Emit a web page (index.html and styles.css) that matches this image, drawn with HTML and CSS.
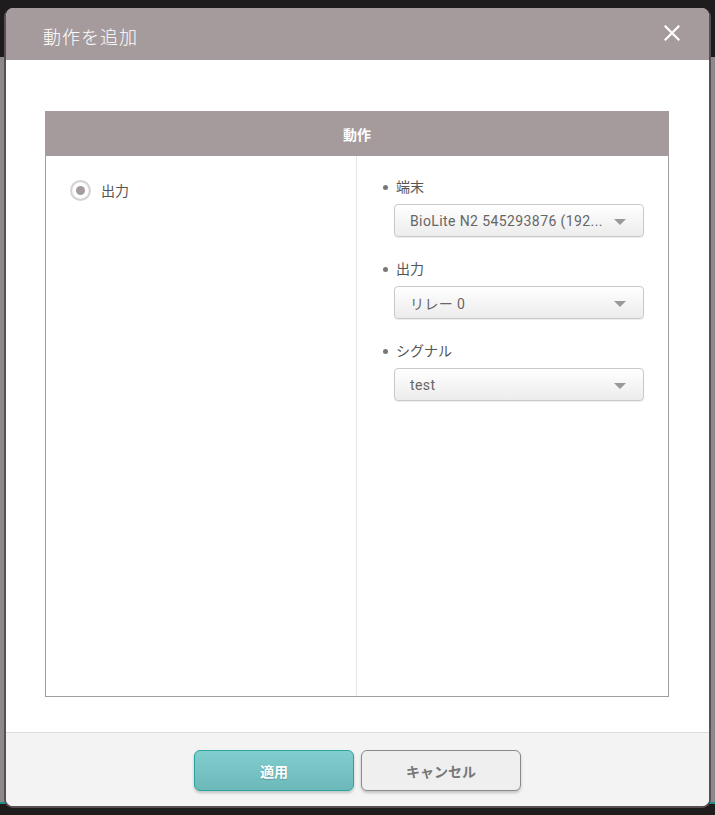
FILE: index.html
```html
<!DOCTYPE html>
<html lang="ja">
<head>
<meta charset="utf-8">
<link rel="stylesheet" href="styles.css">
</head>
<body>
<div class="modal">
  <div class="modal-header">
    <span class="modal-title">動作を追加</span>
    <svg class="close" width="16" height="16" viewBox="0 0 16 16"><path d="M1.5 1.5 L14.5 14.5 M14.5 1.5 L1.5 14.5" stroke="#fff" stroke-width="2.2" stroke-linecap="square"/></svg>
  </div>
  <div class="modal-body">
    <div class="panel">
      <div class="panel-head">動作</div>
      <div class="panel-cols">
        <div class="col-left">
          <label class="radio-row">
            <span class="radio"><span class="dot"></span></span>
            <span class="radio-label">出力</span>
          </label>
        </div>
        <div class="col-right">
          <div class="field">
            <div class="field-label">端末</div>
            <div class="select"><span class="sel-text">BioLite N2 545293876 (192...</span><span class="arrow"></span></div>
          </div>
          <div class="field">
            <div class="field-label">出力</div>
            <div class="select"><span class="sel-text">リレー 0</span><span class="arrow"></span></div>
          </div>
          <div class="field">
            <div class="field-label">シグナル</div>
            <div class="select"><span class="sel-text">test</span><span class="arrow"></span></div>
          </div>
        </div>
      </div>
    </div>
  </div>
  <div class="modal-footer">
    <button class="btn btn-apply">適用</button>
    <button class="btn btn-cancel">キャンセル</button>
  </div>
</div>
</body>
</html>
```

FILE: styles.css
```css
html, body {
  margin: 0;
  padding: 0;
}
body {
  width: 715px;
  height: 815px;
  overflow: hidden;
  font-family: Roboto, "Noto Sans CJK JP", sans-serif;
  background: linear-gradient(to bottom, #1e1c1d 0, #1e1c1d 57px, #8d898b 57px, #8d898b 802px, #1f8f8a 802px, #1f8f8a 804px, #1e1c1d 804px);
  padding-top: 8px;
  box-sizing: border-box;
}
.modal {
  margin-left: 4px;
  width: 707px;
  height: 800px;
  box-sizing: border-box;
  border: 2px solid #5a4e55;
  border-top: none;
  border-radius: 9px;
  overflow: hidden;
  background: #fff;
  display: flex;
  flex-direction: column;
}
.modal-header {
  height: 52px;
  flex: none;
  background: #a59b9d;
  display: flex;
  align-items: center;
  justify-content: space-between;
  padding: 0 29px 0 37px;
}
.modal-title {
  color: #fff;
  font-size: 18px;
  font-weight: 300;
  letter-spacing: 1px;
  margin-top: 4px;
}
.close {
  display: block;
  margin-top: -2px;
}
.modal-body {
  flex: 1;
  padding: 51px 40px 0 39px;
}
.panel {
  height: 585px;
  border: 1px solid #a39c9e;
  border-top: none;
  display: flex;
  flex-direction: column;
}
.panel-head {
  height: 45px;
  flex: none;
  margin: 0 -1px;
  background: #a59b9d;
  color: #fff;
  font-weight: 700;
  font-size: 14px;
  display: flex;
  align-items: center;
  justify-content: center;
}
.panel-cols {
  flex: 1;
  display: flex;
}
.col-left {
  width: 311px;
  border-right: 1px solid #e6e6e6;
  padding: 24px 0 0 24px;
  box-sizing: border-box;
}
.radio-row {
  display: flex;
  align-items: center;
  gap: 10px;
}
.radio {
  width: 21px;
  height: 21px;
  box-sizing: border-box;
  border-radius: 50%;
  border: 2px solid #d4d4d4;
  background: #fff;
  box-shadow: inset 0 0 1px #bbb;
  display: flex;
  align-items: center;
  justify-content: center;
}
.dot {
  width: 9px;
  height: 9px;
  border-radius: 50%;
  background: #a59b9d;
}
.radio-label {
  font-size: 14px;
  color: #555;
  margin-top: -2px;
}
.col-right {
  flex: 1;
  padding: 22px 24px 0 37px;
  display: flex;
  flex-direction: column;
  gap: 23px;
}
.field-label {
  position: relative;
  font-size: 14px;
  color: #555;
  line-height: 18px;
  margin-bottom: 8px;
  margin-left: 2px;
}
.field-label::before {
  content: "";
  position: absolute;
  left: -13px;
  top: 7px;
  width: 5px;
  height: 5px;
  border-radius: 50%;
  background: #777;
}
.select {
  height: 33px;
  box-sizing: border-box;
  border: 1px solid #c9c9c9;
  border-radius: 4px;
  background: linear-gradient(to bottom, #ffffff, #ececec);
  box-shadow: 0 1px 1px rgba(0,0,0,0.08);
  display: flex;
  align-items: center;
  justify-content: space-between;
  padding: 0 17px 0 15px;
}
.sel-text {
  font-size: 14px;
  color: #666;
  letter-spacing: 0.4px;
  white-space: nowrap;
}
.arrow {
  width: 0;
  height: 0;
  border-left: 6px solid transparent;
  border-right: 6px solid transparent;
  border-top: 6px solid #999;
  margin-top: 2px;
}
.modal-footer {
  height: 74px;
  flex: none;
  background: #f3f3f3;
  border-top: 1px solid #dcdcdc;
  box-sizing: border-box;
  display: flex;
  justify-content: center;
  align-items: flex-start;
  gap: 7px;
  padding-top: 17px;
}
.btn {
  width: 160px;
  height: 41px;
  border-radius: 6px;
  font-family: Roboto, "Noto Sans CJK JP", sans-serif;
  font-size: 14px;
  font-weight: 700;
  box-shadow: 0 2px 3px rgba(0,0,0,0.2);
  cursor: pointer;
}
.btn-apply {
  background: linear-gradient(to bottom, #82cdcd, #6db8b9);
  border: 1px solid #29a59f;
  color: #fff;
  text-shadow: 0 1px 1px rgba(0,0,0,0.2);
}
.btn-cancel {
  background: #efefef;
  border: 1px solid #8a8a8a;
  color: #777;
}
```
